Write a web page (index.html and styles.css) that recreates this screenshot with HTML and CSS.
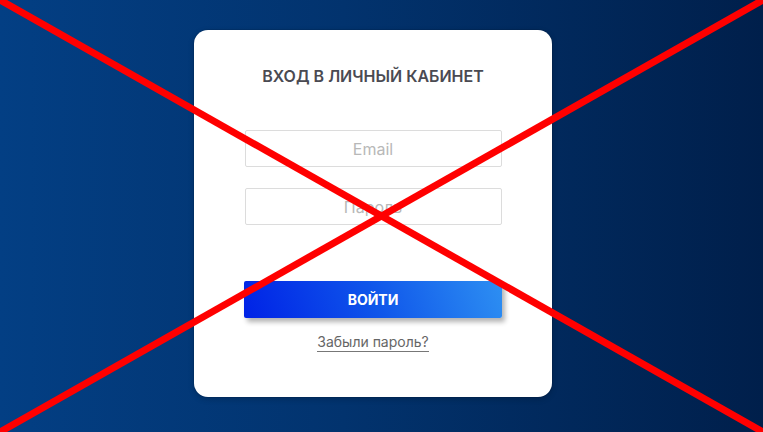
FILE: index.html
```html
<!DOCTYPE html>
<html lang="ru">
<head>
<meta charset="utf-8">
<title>Вход в личный кабинет</title>
<link rel="stylesheet" href="styles.css">
</head>
<body>
<div class="page">
  <form class="card">
    <h1 class="title">ВХОД В ЛИЧНЫЙ КАБИНЕТ</h1>
    <input class="field" type="text" placeholder="Email">
    <input class="field field-second" type="password" placeholder="Пароль">
    <button class="btn" type="button">ВОЙТИ</button>
    <a class="forgot" href="#">Забыли пароль?</a>
  </form>
</div>
<svg class="cross" viewBox="0 0 763 432" preserveAspectRatio="none" aria-hidden="true">
  <line x1="0" y1="0" x2="763" y2="432" stroke="#ff0000" stroke-width="7"/>
  <line x1="763" y1="0" x2="0" y2="432" stroke="#ff0000" stroke-width="7"/>
</svg>
</body>
</html>
```
FILE: styles.css
```css
html, body {
  margin: 0;
  padding: 0;
  height: 100%;
}
body {
  background: linear-gradient(90deg, #033f84 0%, #02336e 45%, #001f4b 100%);
  font-family: Inter, "Noto Sans", sans-serif;
  overflow: hidden;
}
.page {
  padding: 30px 0 0 194px;
}
.card {
  box-sizing: border-box;
  width: 358px;
  height: 367px;
  background: #ffffff;
  border-radius: 14px;
  box-shadow: 0 0 0 1px rgba(0,0,0,0.08), 0 2px 6px rgba(0,0,0,0.2);
  padding: 36px 50px 0 50px;
  display: flex;
  flex-direction: column;
  align-items: center;
}
.title {
  margin: 0;
  font-size: 16px;
  line-height: 21px;
  font-weight: 600;
  color: #4a4a52;
  letter-spacing: 0;
}
.field {
  box-sizing: border-box;
  width: 257px;
  height: 37px;
  margin-top: 43px;
  border: 1px solid #dcdcdc;
  border-radius: 2px;
  text-align: center;
  font-family: Inter, "Noto Sans", sans-serif;
  font-size: 16px;
  color: #333;
  outline: none;
  background: #fff;
}
.field::placeholder {
  color: #b8b8b8;
}
.field-second {
  margin-top: 21px;
}
.btn {
  margin-top: 56px;
  width: 258px;
  height: 37px;
  border: none;
  border-radius: 2px;
  background: linear-gradient(70deg, #0022e6 0%, #0f55ea 50%, #2d8ff2 100%);
  box-shadow: 3px 4px 5px rgba(0,0,0,0.3);
  color: #ffffff;
  font-family: Inter, "Noto Sans", sans-serif;
  font-size: 14px;
  font-weight: 700;
  letter-spacing: 0;
  cursor: pointer;
}
.forgot {
  margin-top: 14px;
  font-size: 14px;
  line-height: 19px;
  color: #666;
  text-decoration: none;
  border-bottom: 1px solid #777;
}
.cross {
  position: absolute;
  left: 0;
  top: 0;
  width: 763px;
  height: 432px;
  pointer-events: none;
}
```
